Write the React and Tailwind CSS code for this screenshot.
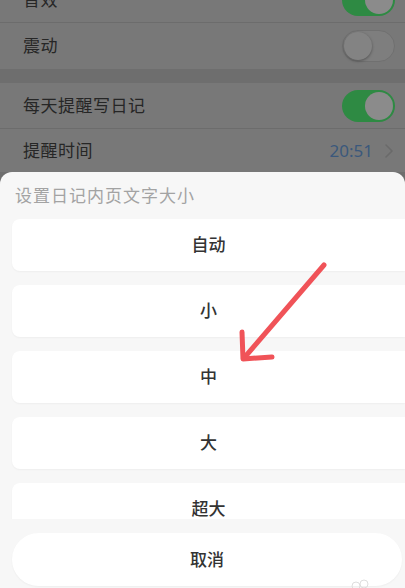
import React from "react";

const font = { fontFamily: '"Noto Sans", "Noto Sans CJK SC", sans-serif' };

function Toggle({ on }) {
    return on ? (
        <div className="w-[53px] h-[32px] rounded-full bg-[#2e8a43] flex items-center justify-end pr-[2px]">
            <div className="w-[28px] h-[28px] rounded-full bg-[#8b8b8b]" />
        </div>
    ) : (
        <div className="w-[53px] h-[32px] rounded-full bg-[#7e7e7e] border border-[#707070] flex items-center pl-[1px]">
            <div className="w-[28px] h-[28px] rounded-full bg-[#838383] shadow-[0_1px_3px_rgba(0,0,0,0.35)]" />
        </div>
    );
}

function Row({ label, children, border, h = "h-[46px]" }) {
    return (
        <div className={`${h} flex items-center justify-between pl-[23px] pr-[10px] bg-[#787878] ${border ? "border-b border-[#6c6c6c]" : ""}`}>
            <span className="text-[17px] text-[#262626] tracking-[0.5px]">{label}</span>
            {children}
        </div>
    );
}

const sizes = ["自动", "小", "中", "大", "超大"];

export default function App() {
    return (
        <div className="w-[405px] h-[588px] overflow-hidden relative flex flex-col bg-[#6e6e6e]" style={font}>
            <div className="h-[172px] flex flex-col shrink-0 overflow-hidden">
                <div className="-mt-[23px]">
                    <Row label="音效" border>
                        <Toggle on />
                    </Row>
                    <Row label="震动">
                        <Toggle />
                    </Row>
                    <div className="h-[14px] bg-[#6e6e6e]" />
                    <Row label="每天提醒写日记" border>
                        <Toggle on />
                    </Row>
                    <Row label="提醒时间" h="h-[44px]">
                        <div className="flex items-center gap-[12px] pr-[2px]">
                            <span className="text-[17px] text-[#3b587c]">20:51</span>
                            <svg width="8" height="14" viewBox="0 0 8 14" fill="none">
                                <path d="M1 1l6 6-6 6" stroke="#6a6a6a" strokeWidth="1.5" strokeLinecap="round" strokeLinejoin="round" />
                            </svg>
                        </div>
                    </Row>
                </div>
            </div>

            <div className="flex-1 flex flex-col bg-[#f7f7f7] rounded-t-[12px] min-h-0">
                <div className="h-[47px] flex items-center pl-[15px]">
                    <span className="text-[17px] tracking-[1px] text-[#a3a3a3]">设置日记内页文字大小</span>
                </div>
                <div className="h-[300px] overflow-hidden flex flex-col gap-[14px] pl-[12px]">
                    {sizes.map((s) => (
                        <div key={s} className="h-[52px] shrink-0 w-[393px] bg-white rounded-l-[8px] shadow-[0_1px_2px_rgba(0,0,0,0.04)] flex items-center justify-center">
                            <span className="text-[17px] font-medium text-[#333]">{s}</span>
                        </div>
                    ))}
                </div>
                <div className="pt-[14px] pl-[12px] pr-[3px]">
                    <div className="h-[53px] bg-white rounded-full flex items-center justify-center shadow-[0_1px_2px_rgba(0,0,0,0.04)]">
                        <span className="text-[17px] font-medium text-[#333]">取消</span>
                    </div>
                </div>
            </div>

            <svg className="absolute left-0 top-0 pointer-events-none" width="405" height="588">
                <g stroke="#f04a50" strokeWidth="5" strokeLinecap="round" strokeLinejoin="round" fill="none" opacity="0.95">
                    <path d="M324 265 L244 358" />
                    <path d="M242 332 L243 359 L272 357" />
                </g>
                <g stroke="#dedede" strokeWidth="1" fill="none">
                    <circle cx="356" cy="586" r="4" />
                    <circle cx="364" cy="584" r="4" />
                </g>
            </svg>
        </div>
    );
}
